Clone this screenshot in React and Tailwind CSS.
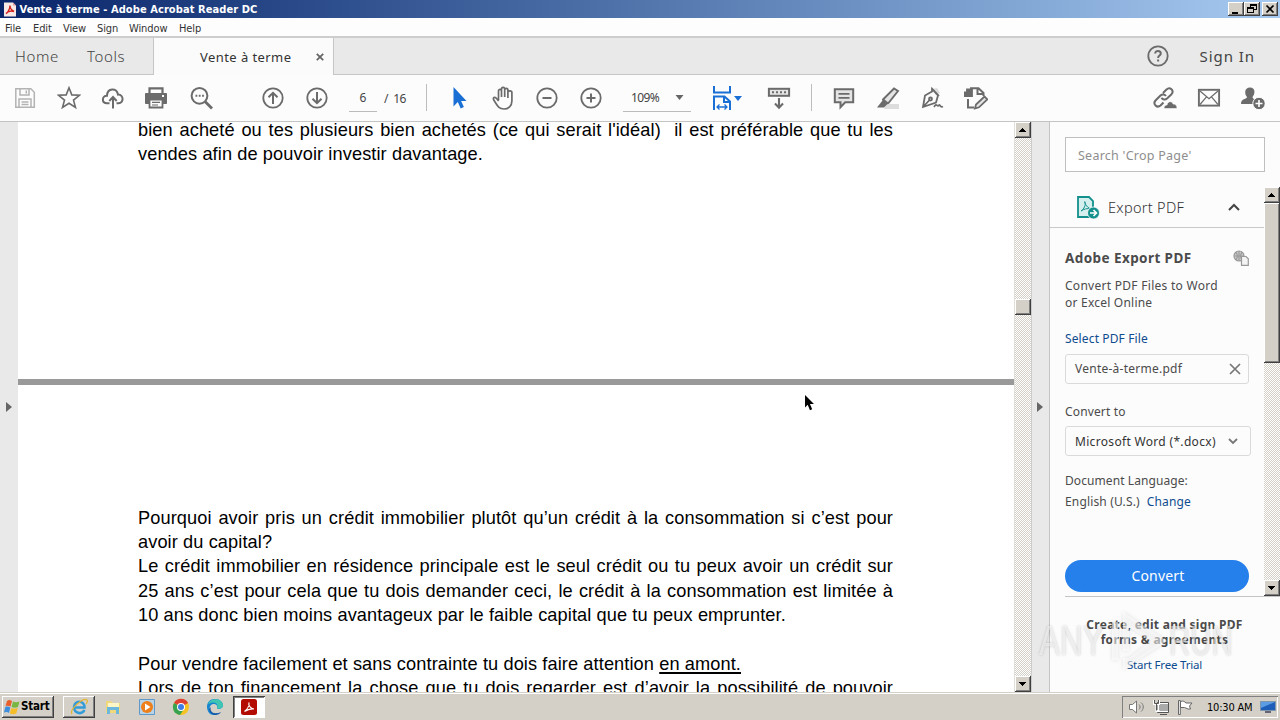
import { useState } from "react";

const menus = [
  { label: "File", width: "w-[28px]" },
  { label: "Edit", width: "w-[30px]" },
  { label: "View", width: "w-[34px]" },
  { label: "Sign", width: "w-[32px]" },
  { label: "Window", width: "w-[50px]" },
  { label: "Help", width: "w-[30px]" },
];

const bevel =
  "bg-[#d4d0c8] shadow-[inset_-1px_-1px_0_#404040,inset_1px_1px_0_#fff,inset_-2px_-2px_0_#808080]";
const dither =
  "bg-[repeating-conic-gradient(#fff_0_25%,#d4d0c8_0_50%)] bg-[length:2px_2px]";

function Icon({ children, className = "" }) {
  return (
    <svg
      viewBox="0 0 24 24"
      className={`size-6 shrink-0 ${className}`}
      fill="none"
      stroke="#6b6b6b"
      strokeWidth="1.8"
    >
      {children}
    </svg>
  );
}

function Slot({ children }) {
  return <button className="flex w-11 shrink-0 items-center justify-center">{children}</button>;
}

function Arrow({ dir }) {
  return (
    <svg viewBox="0 0 16 16" className="size-4" fill="#000" shapeRendering="crispEdges">
      {dir === "up" ? <path d="M7 6h1v1h1v1h1v1h1v1H4V9h1V8h1V7h1z" /> : <path d="M4 6h7v1h-1v1H9v1H8v1H7V9H6V8H5V7H4z" />}
    </svg>
  );
}

function TitleBar() {
  return (
    <div className="flex h-[18px] shrink-0 items-center bg-linear-to-r from-[#0a246a] to-[#a6caf0] pl-[4px] pr-[2px]">
      <svg viewBox="0 0 12 14" className="h-[15px] w-[12px]">
        <path d="M0 0h9l3 3v11H0z" fill="#f8e9e7" />
        <path d="M9 0v3h3" fill="#d99" />
        <path d="M2 11c2-1 4-5 4-8 0 3 2 5 4 6-3-1-6 0-8 2z" fill="none" stroke="#d3221b" strokeWidth="1.4" />
      </svg>
      <span className="ml-[3.500px] whitespace-nowrap pt-px font-['DejaVu_Sans_Condensed','DejaVu_Sans',sans-serif] text-[11px] font-bold font-stretch-condensed leading-[18px] tracking-[0.080px] text-white">
        Vente à terme - Adobe Acrobat Reader DC
      </span>
      <div className="ml-auto flex">
        <button className={`h-[14px] w-4 ${bevel}`}>
          <svg viewBox="0 0 16 14" className="h-[14px] w-4"><path d="M4 10h6v2H4z" /></svg>
        </button>
        <button className={`h-[14px] w-4 ${bevel}`}>
          <svg viewBox="0 0 16 14" className="h-[14px] w-4" fill="none" stroke="#000" shapeRendering="crispEdges">
            <path d="M6.5 5V2.5h6v5H10M6 3h7M3.5 5.5h6v5h-6zM3 6h7" />
          </svg>
        </button>
        <button className={`ml-[2px] h-[14px] w-4 ${bevel}`}>
          <svg viewBox="0 0 16 14" className="h-[14px] w-4" stroke="#000" strokeWidth="1.7"><path d="M4.5 3.5l7 7M11.5 3.5l-7 7" /></svg>
        </button>
      </div>
    </div>
  );
}

function MenuBar() {
  return (
    <div className="flex h-[20px] shrink-0 items-center border-b-2 border-[#cdcdcd] bg-[#fdfdfd] pt-[3px] pl-[5px] font-['DejaVu_Sans_Condensed','DejaVu_Sans',sans-serif] text-[11px] font-stretch-condensed leading-[15px] tracking-[-0.1px] text-[#333]">
      {menus.map((m) => (
        <span key={m.label} className={`whitespace-nowrap ${m.width}`}>{m.label}</span>
      ))}
    </div>
  );
}

function TabBar() {
  return (
    <div className="flex h-[37px] shrink-0 bg-[#e9e9e9] font-['Noto_Sans',sans-serif] text-[15px] text-[#444]">
      <div className="flex w-[154px] items-center border-b border-r border-[#c6c6c6] pl-[15px] font-light">
        <span className="w-[72px] tracking-[0.6px]">Home</span>
        <span className="tracking-[0.6px]">Tools</span>
      </div>
      <div className="flex w-[179px] items-center bg-[#fbfbfb] pt-px pl-[46px] text-[13px] text-[#333]">
        <span className="w-[116px] whitespace-nowrap pt-px tracking-[0.1px]"><span className="tracking-[0.430px]">Vente à terme</span></span>
        <svg viewBox="0 0 8 8" className="size-2" stroke="#666" strokeWidth="1.8"><path d="M.8.8l6.4 6.4M7.2.8L.8 7.2" /></svg>
      </div>
      <div className="flex flex-1 items-center justify-end border-b border-l border-[#c6c6c6] pr-[25px]">
        <Icon className="mr-[29px]">
          <circle cx="12" cy="12" r="9.7" />
          <path d="M9.2 9.6c0-3.6 5.6-3.4 5.6 0 0 2-2.7 2-2.7 4.4M12.1 15.5v2" strokeWidth="2" />
        </Icon>
        <span className="whitespace-nowrap tracking-[0.950px]">Sign In</span>
      </div>
    </div>
  );
}

function Toolbar() {
  return (
    <div className="flex h-[47px] shrink-0 border-b border-[#c4c4c4] bg-[#fcfcfc] pl-[3px] pr-[5px] font-['Noto_Sans',sans-serif] text-[12px] text-[#444]">
      <Slot>
        <Icon>
          <g stroke="#b3b3b3" strokeWidth="1.5">
            <path d="M2.8 2.8h15l3.5 3.5v15H2.8zM7 3v6h9V3M6 21v-8h12v8M8.5 16h7M8.5 18.6h7M13.3 4.5v3" />
          </g>
        </Icon>
      </Slot>
      <Slot>
        <Icon><path d="M12 1.8l2.8 7.1 7.6.4-5.9 4.8 2 7.4-6.5-4.2-6.5 4.2 2-7.4-5.9-4.8 7.6-.4z" strokeWidth="1.6" /></Icon>
      </Slot>
      <Slot>
        <Icon>
          <path d="M8.5 17.2H6C.5 17.2.5 9.6 6 9.8 6.2 1.5 16 1.5 17 8.6c6-.3 6 8.600.5 8.600h-2M12 22.5V11.5M8.300 15L12 11l3.700 4" strokeWidth="2" />
        </Icon>
      </Slot>
      <Slot>
        <Icon className="-ml-[2px]">
          <path d="M5.500 7V2.300h13V7" strokeWidth="2.200" />
          <path d="M1.500 7.500h21v10h-4v-4h-13v4h-4z" fill="#6b6b6b" strokeWidth="1" />
          <path d="M5.500 13.500h13v8h-13z" fill="#fcfcfc" strokeWidth="1.800" />
          <path d="M8 16.300h8M8 19h6" strokeWidth="1.200" />
          <path d="M18 10h2" stroke="#fff" />
        </Icon>
      </Slot>
      <Slot>
        <Icon>
          <circle cx="10.500" cy="9.800" r="7.900" strokeWidth="2" />
          <path d="M16 15.600l7 7" strokeWidth="2.800" />
          <path d="M6.500 9.800H15" strokeDasharray="1.800 1.500" strokeWidth="2" />
        </Icon>
      </Slot>
      <div className="w-7 shrink-0" />
      <Slot>
        <Icon><circle cx="12" cy="12" r="9.700" /><path d="M12 18V7M7.500 11.300L12 6.800l4.500 4.500" strokeWidth="2" /></Icon>
      </Slot>
      <Slot>
        <Icon><circle cx="12" cy="12" r="9.700" /><path d="M12 6v11M7.500 12.700l4.500 4.500 4.500-4.500" strokeWidth="2" /></Icon>
      </Slot>
      <div className="ml-[10px] w-[35px] shrink-0 pt-[10px]">
        <span className="flex h-[27px] w-[28px] items-center justify-center border-b border-[#bbb]">6</span>
      </div>
      <span className="w-[42px] shrink-0 whitespace-nowrap leading-[47px] tracking-[-0.500px]">/&nbsp; 16</span>
      <div className="mt-[9px] mr-[10px] h-[27px] w-px shrink-0 bg-[#bdbdbd]" />
      <Slot>
        <Icon><path d="M6.500 1v19.500l4.300-4.400 2.900 6.300 3.200-1.400-2.800-6.100h5.400z" fill="#1a6fd4" stroke="none" /></Icon>
      </Slot>
      <Slot>
        <Icon>
          <path d="M7.500 14V5.300c0-2.500 3-2.500 3 0V11M10.500 10V3.100c0-2.400 3.200-2.400 3.200 0V11M13.700 10V4c0-2.300 3.200-2.300 3.200 0v8M16.900 11V6.500c0-2.300 4-2 4 0V15c0 5-3.500 8-8 8-5 0-6-2.500-9.800-8.500-2.200-3.200 1-4 2.500-2l2 2.500" strokeWidth="1.700" />
        </Icon>
      </Slot>
      <Slot>
        <Icon><circle cx="12" cy="12" r="9.700" /><path d="M7.500 12h9" strokeWidth="2" /></Icon>
      </Slot>
      <Slot>
        <Icon><circle cx="12" cy="12" r="9.700" /><path d="M7.500 12h9M12 7.500v9" strokeWidth="2" /></Icon>
      </Slot>
      <div className="mt-[9px] ml-[10px] flex h-[28px] w-[68px] shrink-0 items-center border-b border-[#bbb] pl-[8px] pr-[7px]">
        <span className="tracking-[-0.600px]">109%</span>
        <svg viewBox="0 0 8 5" className="ml-auto h-[5px] w-[9px]"><path d="M0 0h8L4 5z" fill="#666" /></svg>
      </div>
      <div className="flex w-[66px] shrink-0 items-center pl-[19px]">
        <Icon>
          <g stroke="#1a6fd4">
            <path d="M4 0v6.500h16V0" strokeWidth="2" />
            <path d="M4 24V10.500h10.500l5.500 5V24M14 10.500v5.500h6" strokeWidth="2" />
            <path d="M7 21h10M9.500 18.500L7 21l2.500 2.500M14.500 18.500L17 21l-2.500 2.500" strokeWidth="1.300" />
          </g>
        </Icon>
        <svg viewBox="0 0 8 5" className="h-[5px] w-[8px]"><path d="M0 0h8L4 5z" fill="#1a6fd4" /></svg>
      </div>
      <Slot>
        <Icon>
          <rect x="1.900" y="2.800" width="20.200" height="7" strokeWidth="2" fill="#e4e4e4" />
          <path d="M5 6.300h14.500" strokeDasharray="2 2" strokeWidth="2" />
          <path d="M12 12v9.500M8 17.500l4 4.200 4-4.200" strokeWidth="2.100" />
        </Icon>
      </Slot>
      <div className="mt-[9px] mr-[10px] ml-[10px] h-[27px] w-px shrink-0 bg-[#bdbdbd]" />
      <Slot>
        <Icon>
          <path d="M2.800 3.300h18.400v13h-8l-4.700 5v-5H2.800z" fill="#e4e4e4" strokeWidth="2" />
          <path d="M6.500 7.800h11M6.500 11.800h11" strokeWidth="1.700" />
        </Icon>
      </Slot>
      <Slot>
        <Icon>
          <path d="M10 18h13v5H8z" fill="#ddd" stroke="none" />
          <path d="M7 13.500L18 2.500l4 2.500-9.500 12-4 1zM7 13.500l5 4" strokeWidth="1.900" fill="#e4e4e4" />
          <path d="M6.500 14.500l4.500 4-3 3H1z" fill="#6b6b6b" stroke="none" />
        </Icon>
      </Slot>
      <Slot>
        <Icon>
          <path d="M12 3l5-1 3 5-4 2z" fill="#ddd" stroke="none" />
          <path d="M12 3l6 6.500-2 7L3 21 5 9.500l7-4zM3 21l7-7.500M11.500 2l7.500 8" strokeWidth="1.800" />
          <circle cx="10.500" cy="13" r="1.500" />
          <path d="M14 21c3-5 3 1 5-2 1-1 1 3 4 1.500" strokeWidth="1.700" />
        </Icon>
      </Slot>
      <Slot>
        <Icon>
          <path d="M0 6.500h8V10H0zM3 3.500h5v5H3z" fill="#6b6b6b" />
          <path d="M6 2.300h8.500L19.500 7v3M13.500 2.500V8h6M4 13v8.500h6" strokeWidth="2" />
          <path d="M11 22.500l1-4 8.500-8 2.800 2.800-8.300 8z" fill="#e4e4e4" />
        </Icon>
      </Slot>
      <div className="flex-1" />
      <Slot>
        <Icon>
          <path d="M10 7l3.500-3.500c3.500-3.300 8 1.200 5 4.700L14 12.500c-2 1.800-4.500 1-5.500-.700M13 10c-1.500-2-4-2-5.500-.5L2.500 14.500c-3 3.500 1.500 8 5 5l3-3" strokeWidth="2" />
          <path d="M11 22.500c0-3 2-3.500 3-3.500 1-4.500 5.500-4 6-1 3 0 4 2 4 4.500z" fill="#6b6b6b" stroke="#fcfcfc" strokeWidth=".6" />
        </Icon>
      </Slot>
      <Slot>
        <Icon>
          <rect x="1.900" y="3.800" width="20.200" height="15.800" strokeWidth="1.900" />
          <path d="M3 5l9 7.800L21 5M3 18.500l6.500-7.700M21 18.500l-6.500-7.700" strokeWidth="1.200" />
        </Icon>
      </Slot>
      <Slot>
        <Icon>
          <path d="M9 1.500c6 0 5 7 2.500 9.500 0 2.500 4.500 2 4.500 7H0c0-6 6-4.500 6-7-2.500-2.500-3-9.500 3-9.500z" fill="#6b6b6b" stroke="none" />
          <circle cx="18" cy="17.500" r="6.200" fill="#6b6b6b" stroke="#fcfcfc" strokeWidth="1" />
          <path d="M14.500 17.500h7M18 14v7" stroke="#fff" strokeWidth="1.600" />
        </Icon>
      </Slot>
    </div>
  );
}

function Line({ children, justify }) {
  return (
    <p
      className={`h-[24.300px] whitespace-nowrap ${justify ? "[text-align-last:justify]" : ""}`}
    >
      {children}
    </p>
  );
}

function Document() {
  return (
    <div className="flex min-w-0 flex-1 flex-col overflow-hidden bg-white font-['Liberation_Sans',Arial,sans-serif] text-[18.200px] leading-[24.300px] tracking-[0.100px] text-black">
      <div className="h-[257px] shrink-0 overflow-hidden pl-[120px]">
        <div className="-mt-[4px] w-[755px]">
          <Line justify>bien acheté ou tes plusieurs bien achetés (ce qui serait l'idéal)&nbsp; il est préférable que tu les</Line>
          <Line>vendes afin de pouvoir investir davantage.</Line>
        </div>
      </div>
      <div className="h-[6px] shrink-0 bg-[#999]" />
      <div className="w-[875px] pt-[120.800px] pl-[120px]">
        <Line justify>Pourquoi avoir pris un crédit immobilier plutôt qu’un crédit à la consommation si c’est pour</Line>
        <Line>avoir du capital?</Line>
        <Line justify>Le crédit immobilier en résidence principale est le seul crédit ou tu peux avoir un crédit sur</Line>
        <Line justify>25 ans c’est pour cela que tu dois demander ceci, le crédit à la consommation est&nbsp;limitée à</Line>
        <Line>10 ans donc bien moins avantageux par le faible capital que tu peux emprunter.</Line>
        <Line />
        <Line>
          Pour vendre facilement et sans contrainte tu dois faire attention{" "}
          <span className="underline decoration-2 underline-offset-2">en amont.</span>
        </Line>
        <Line justify>Lors de ton financement la chose que tu dois regarder est d’avoir la possibilité de pouvoir</Line>
      </div>
    </div>
  );
}

function ExportPanel() {
  const [format] = useState("Microsoft Word (*.docx)");

  return (
    <div className="relative flex w-[231px] shrink-0 flex-col border-l border-[#c4c4c4] bg-[#fcfcfc] font-['Noto_Sans',sans-serif] text-[12px] text-[#4b4b4b]">
      <div className="mt-[15px] ml-[15px] flex h-[35px] w-[200px] shrink-0 items-center border border-[#bfbfbf] bg-white pt-[3px] pl-[12px] text-[12.500px] tracking-[0.250px] text-[#8e8e8e]">
        Search 'Crop Page'
      </div>
      <div className="mt-[15px] flex h-[409px] shrink-0">
        <div className="flex w-[214px] flex-col">
          <div className="flex h-[41px] shrink-0 items-center border-b border-[#c9c9c9] pl-[26px] text-[15px]">
            <svg viewBox="0 0 24 24" className="size-6" fill="none" stroke="#13908c" strokeWidth="1.800">
              <path d="M2 2h11l4 4v16H2z" fill="#d5eeee" />
              <path d="M5 16c3-2 5-6 4-9-1-2 0 5 6 7-4-1-7 0-10 2z" strokeWidth="1" />
              <circle cx="17.500" cy="18" r="6" fill="#13908c" stroke="#fcfcfc" strokeWidth=".800" />
              <path d="M14 18h6M17.500 15l3 3-3 3" stroke="#fff" strokeWidth="1.600" />
            </svg>
            <span className="ml-[8px] w-[120px] whitespace-nowrap pt-[2px] text-[14.500px] font-light tracking-[0.300px] text-[#333]">Export PDF</span>
            <svg viewBox="0 0 12 8" className="h-[8px] w-[12px]" fill="none" stroke="#444" strokeWidth="2"><path d="M1 7l5-5 5 5" /></svg>
          </div>
          <div className="flex flex-col pt-[20px] pl-[15px]">
            <div className="flex h-5 items-center text-[13.500px] font-bold">
              <span className="w-[168px] whitespace-nowrap tracking-[0.420px]">Adobe Export PDF</span>
              <svg viewBox="0 0 16 16" className="size-4" fill="none" stroke="#999" strokeWidth="1.200">
                <circle cx="6" cy="6" r="5" fill="#ccc" />
                <path d="M1 6h10M6 1v10M3 2c2 3 2 5 0 8M9 2c-2 3-2 5 0 8" />
                <path d="M8.500 6.500h4.500l2.300 2.300v6.500H8.500z" fill="#f4f4f4" />
              </svg>
            </div>
            <p className="mt-[9px] h-[34px] whitespace-nowrap leading-[17px] tracking-[0.280px]">
              Convert PDF Files to Word<br /><span className="tracking-[0.220px]">or Excel Online</span>
            </p>
            <a className="mt-[19px] h-[17px] leading-[17px] tracking-[0.130px] text-[#0f4c8f]">Select PDF File</a>
            <div className="mt-[7px] flex h-[30px] w-[184px] items-center justify-between rounded-[3px] border border-[#dadada] pr-[7px] pl-[9px]">
              <span className="tracking-[0.250px]">Vente-à-terme.pdf</span>
              <svg viewBox="0 0 12 12" className="size-3" stroke="#777" strokeWidth="1.700"><path d="M1 1l10 10M11 1L1 11" /></svg>
            </div>
            <span className="mt-[19px] h-[17px] leading-[17px] tracking-[0.150px]">Convert to</span>
            <div className="mt-[6px] flex h-[30px] w-[186px] items-center justify-between rounded-[3px] border border-[#dadada] pr-[12px] pl-[9px]">
              <span className="whitespace-nowrap pt-[2px] tracking-[0.320px] text-[#333]">{format}</span>
              <svg viewBox="0 0 10 7" className="h-[7px] w-[10px]" fill="none" stroke="#777" strokeWidth="1.800"><path d="M1 1l4 4 4-4" /></svg>
            </div>
            <span className="mt-[16px] h-[17px] leading-[17px] tracking-[0.080px]">Document Language:</span>
            <span className="mt-[4px] h-[17px] whitespace-nowrap leading-[17px] tracking-[0.150px]">
              English (U.S.)<a className="ml-[7px] text-[#0f4c8f]">Change</a>
            </span>
            <button className="mt-[50px] h-[32px] w-[184px] rounded-full bg-[#2680eb] pb-px pl-[2px] text-[14px] tracking-[0.200px] text-white">Convert</button>
          </div>
        </div>
        <div className={`flex w-4 flex-col ${dither}`}>
          <button className={`h-4 ${bevel}`}><Arrow dir="up" /></button>
          <div className={`h-[160px] ${bevel}`} />
          <button className={`mt-auto h-4 ${bevel}`}><Arrow dir="down" /></button>
        </div>
      </div>
      <div className="ml-[15px] flex flex-1 flex-col items-center border-t border-[#c4c4c4] pt-[20px] pr-[16px]">
        <p className="text-center text-[12px] font-bold leading-[15px] tracking-[0.280px]">
          <span className="whitespace-nowrap">Create, edit and sign PDF</span><br />forms &amp; agreements
        </p>
        <a className="mt-[9px] text-[11.500px] leading-[17px] tracking-[-0.200px] text-[#0f4c8f]">Start Free Trial</a>
      </div>
      <Watermark />
    </div>
  );
}

function Watermark() {
  return (
    <div className="pointer-events-none absolute top-[486px] -left-[11px] flex w-[195px] items-center font-['Liberation_Sans',Arial,sans-serif] text-[42px] leading-[66px] text-white/55 [text-shadow:0_0_3px_#0003]">
      <span className="w-[70px] shrink-0 origin-left scale-x-75">ANY</span>
      <svg viewBox="0 0 60 64" className="h-[64px] w-[60px] shrink-0 drop-shadow-[0_0_2px_#0003]">
        <path d="M14 3l44 29-44 29V49h6l22-17-22-14v24h-6zM3 13h6v38H3z" fill="#fff" fillOpacity=".55" />
      </svg>
      <span className="w-[70px] shrink-0 origin-left scale-x-70">RUN</span>
    </div>
  );
}

function Taskbar() {
  return (
    <div className="flex h-[28px] shrink-0 items-center border-t border-[#d4d0c8] bg-[#d4d0c8] pt-[3px] pr-[2px] pb-[2px] pl-[2px] font-['DejaVu_Sans_Condensed','DejaVu_Sans',sans-serif] text-[11px] font-stretch-condensed text-black shadow-[inset_0_1px_0_#fff]">
      <button className={`flex h-[22px] w-[52px] items-center pl-[2px] font-bold ${bevel}`}>
        <svg viewBox="0 0 16 16" className="size-4 shrink-0">
          <path d="M3 2c2-1.500 3-1 5 0L6.500 7.500C4.500 6.500 3 6.500 1.500 7z" fill="#e8602c" />
          <path d="M9 2.500c2 1 4 1 6.500 0L14 8c-2 1-4.500 1-6.500 0z" fill="#7ab742" />
          <path d="M1.300 8c2-.8 3.500-.5 5 .5L5 14c-2-1.500-3-1-5-.5z" fill="#3e8ede" />
          <path d="M7.300 9c2 1 4 1 6.500 0l-1.500 5.500c-2 1-4.500 1-6.500 0z" fill="#f5bd28" />
        </svg>
        <span className="ml-px text-[11.500px] tracking-[-0.200px]">Start</span>
      </button>
      <button className={`ml-[9px] flex h-[22px] w-8 items-center justify-center ${bevel}`}>
        <svg viewBox="0 0 18 18" className="size-[18px]" fill="none">
          <path d="M14.500 12c-3 5.500-10.500 3-10.500-3 0-7 10.500-7 10.500.5H5" stroke="#329bd8" strokeWidth="2.500" />
          <path d="M2 16C-1 12 13-1 17 2c1 .8 0 3-1 4" stroke="#e2b537" strokeWidth="1.300" />
        </svg>
      </button>
      <svg viewBox="0 0 18 18" className="ml-[9px] size-[18px]">
        <path d="M2 3h5l2 2h7v10H2z" fill="#efd77c" />
        <path d="M4 5h11v4H4z" fill="#fff6c8" />
        <path d="M3 9h12v7h-3v-4H6v4H3z" fill="#6cb7dc" />
      </svg>
      <svg viewBox="0 0 18 18" className="ml-[16px] size-[18px]">
        <path d="M1.500 1.500h15v15h-15z" fill="#b9d3e6" stroke="#5d9acb" />
        <circle cx="9" cy="9" r="6" fill="#ed7f1c" />
        <path d="M7 5.500v7L12.500 9z" fill="#fff" />
      </svg>
      <svg viewBox="0 0 18 18" className="ml-[16px] size-[18px]">
        <circle cx="9" cy="9" r="8" fill="#f5c324" />
        <path d="M9 9L2 5a8 8 0 0114 0z" fill="#de4032" />
        <path d="M9 9L2 5a8 8 0 006 12l4-6z" fill="#37a350" />
        <circle cx="9" cy="9" r="4" fill="#fff" />
        <circle cx="9" cy="9" r="3" fill="#3e7de6" />
      </svg>
      <svg viewBox="0 0 18 18" className="ml-[16px] size-[18px]">
        <path d="M1 9C1 4 4 1 9 1s8 3 8 6.500c0 3-4 4-6 3 1-3-1-4.500-3-4.500-4 0-5 4-4 7 1 2 4 3.500 8 2-5 5-11 0-11-6z" fill="#1687cf" />
        <path d="M2 6c2-6 14-7 15 1 0 4-4 4-6 3.500C13 4 7 3 2 6z" fill="#3fc5b2" />
        <path d="M5 9c-2 5 4 8 10 5-4 6-12 2-12-3z" fill="#1559a9" />
      </svg>
      <button className="ml-[9px] flex h-[22px] w-8 items-center justify-center bg-white shadow-[inset_1px_1px_0_#404040,inset_-1px_-1px_0_#fff,inset_2px_2px_0_#808080]">
        <svg viewBox="0 0 16 16" className="size-4">
          <rect width="16" height="16" rx="2.500" fill="#b30b00" />
          <path d="M3.500 12.500c3-2 5-6 4.500-9-1 3 1.500 6 5 6.500-3.500-.5-6.500.5-9.500 2.500z" fill="none" stroke="#fff" strokeWidth="1.100" />
        </svg>
      </button>
      <div className="ml-auto flex h-[22px] w-[156px] items-center pl-[6px] shadow-[inset_1px_1px_0_#808080,inset_-1px_-1px_0_#fff]">
        <svg viewBox="0 0 18 16" className="h-4 w-[18px]" fill="none" stroke="#777">
          <path d="M1.500 5.500h3L8.500 2v12l-4-3.500h-3z" fill="#fff" />
          <path d="M11 5.500c1.500 1.500 1.500 3.500 0 5M13 3.500c3 2.500 3 6.500 0 9" />
        </svg>
        <svg viewBox="0 0 16 16" className="ml-[7px] size-4" fill="none" stroke="#555">
          <path d="M5.500 4.500h10v8h-10z" fill="#aaa" stroke="#fff" />
          <path d="M4.500 3.500h11v10h-11zM7 15.500h7" />
          <path d="M1 1v4h5V1M3.500 5v7h3" stroke="#fff" strokeWidth="2" />
          <path d="M1.500 1v3.500h4V1M3.500 5v6.500" />
        </svg>
        <svg viewBox="0 0 16 16" className="ml-[8px] size-4" fill="#fff" stroke="#666">
          <path d="M1.500 1.500h1.800v14H1.500zM3.500 2.500c3-1 4 0 5.500 1.500h6l-2.500 3 1 3c-3 .5-4-1-6-1.500H3.500z" />
        </svg>
        <span className="ml-[14px] whitespace-nowrap pt-[2px] tracking-[-0.200px]">10:30 AM</span>
        <svg viewBox="0 0 16 14" className="ml-auto mr-[2px] h-[14px] w-4">
          <path d="M.5 1.500h15v9H.5z" fill="#1f5eb8" stroke="#7d96ac" />
          <path d="M1 2h14L1 8z" fill="#5b9ce2" />
          <path d="M5 11h6v2H5z" fill="#667" />
        </svg>
      </div>
    </div>
  );
}

export default function App() {
  return (
    <div className="flex h-[720px] w-[1280px] flex-col overflow-hidden bg-white">
      <TitleBar />
      <MenuBar />
      <TabBar />
      <Toolbar />
      <div className="flex min-h-0 flex-1">
        <div className="flex w-[18px] shrink-0 items-center justify-center bg-[#e9e9e9]">
          <svg viewBox="0 0 6 10" className="h-[10px] w-[6px]"><path d="M0 0l6 5-6 5z" fill="#666" /></svg>
        </div>
        <Document />
        <div className={`flex w-[17px] shrink-0 flex-col border-l border-[#e2dfd9] ${dither}`}>
          <button className={`h-4 ${bevel}`}><Arrow dir="up" /></button>
          <div className={`mt-[161px] h-4 ${bevel}`} />
          <button className={`mt-auto h-4 ${bevel}`}><Arrow dir="down" /></button>
        </div>
        <div className="flex w-[18px] shrink-0 items-center justify-center border-l border-[#ccc] bg-[#e9e9e9]">
          <svg viewBox="0 0 6 10" className="mr-px h-[10px] w-[6px]"><path d="M0 0l6 5-6 5z" fill="#666" /></svg>
        </div>
        <ExportPanel />
      </div>
      <Taskbar />
      <svg viewBox="0 0 10 19" className="pointer-events-none absolute top-[395px] left-[805px] h-[17px] w-[9px]">
        <path d="M0 0v14l3-3 2.500 6 2.500-1-2.500-6H10z" />
      </svg>
    </div>
  );
}
